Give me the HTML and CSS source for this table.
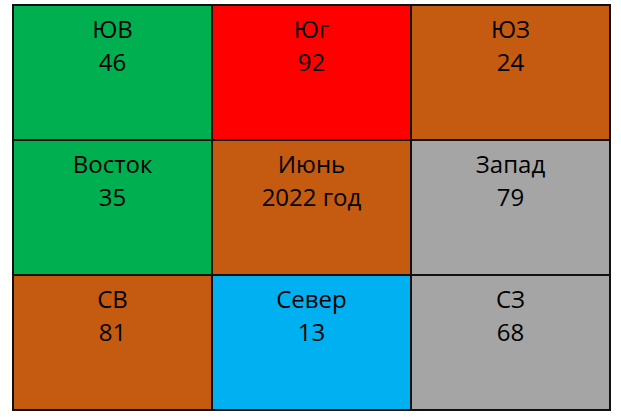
FILE: index.html
```html
<!DOCTYPE html>
<html lang="ru">

<head>
    <meta charset="UTF-8">
    <meta name="viewport" content="width=device-width, initial-scale=1.0">
    <title>Розы ветров — июнь 2022</title>
    <link rel="stylesheet" href="styles.css">
</head>

<body>

    <div class="wind-grid">
        <div class="cell green"><div>ЮВ</div><div>46</div></div>
        <div class="cell red"><div>Юг</div><div>92</div></div>
        <div class="cell orange"><div>ЮЗ</div><div>24</div></div>

        <div class="cell green"><div>Восток</div><div>35</div></div>
        <div class="cell orange"><div>Июнь</div><div>2022 год</div></div>
        <div class="cell gray"><div>Запад</div><div>79</div></div>

        <div class="cell orange"><div>СВ</div><div>81</div></div>
        <div class="cell blue"><div>Север</div><div>13</div></div>
        <div class="cell gray"><div>СЗ</div><div>68</div></div>
    </div>

</body>

</html>
```

FILE: styles.css
```css
body {
    margin: 0;
    padding: 4px 0 0 12px;
    background: #fff;
    font-family: "Open Sans", "Noto Sans", sans-serif;
}

.wind-grid {
    display: grid;
    grid-template-columns: repeat(3, 197px);
    grid-template-rows: repeat(3, 133px);
    gap: 2px;
    padding: 2px;
    width: max-content;
    background: #111;
}

.cell {
    padding-top: 6px;
    text-align: center;
    font-size: 24px;
    line-height: 33px;
    color: #000;
}

.green {
    background-color: #00b050;
}

.red {
    background-color: #ff0000;
}

.orange {
    background-color: #c55a11;
}

.gray {
    background-color: #a5a5a5;
}

.blue {
    background-color: #00b0f0;
}
```
